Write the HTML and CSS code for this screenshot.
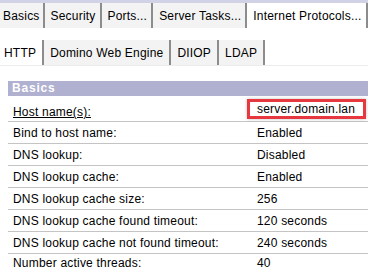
FILE: index.html
```html
<!DOCTYPE html>
<html lang="en">
<head>
    <meta charset="UTF-8">
    <title>Server Document</title>
    <link rel="stylesheet" href="styles.css">
</head>
<body>
    <div class="topstrip"></div>
    <div class="tabs main-tabs">
        <div class="tab first">Basics</div>
        <div class="tab">Security</div>
        <div class="tab">Ports...</div>
        <div class="tab">Server Tasks...</div>
        <div class="tab active">Internet Protocols...</div>
        <div class="tab rest"></div>
    </div>

    <div class="tabs sub-tabs">
        <div class="tab first active">HTTP</div>
        <div class="tab">Domino Web Engine</div>
        <div class="tab">DIIOP</div>
        <div class="tab">LDAP</div>
    </div>

    <div class="section">
        <div class="section-head">Basics</div>
        <div class="row host">
            <span class="label"><u>Host name(s):</u></span>
            <span class="value"><span class="highlight">server.domain.lan</span></span>
        </div>
        <div class="row"><span class="label">Bind to host name:</span><span class="value">Enabled</span></div>
        <div class="row"><span class="label">DNS lookup:</span><span class="value">Disabled</span></div>
        <div class="row"><span class="label">DNS lookup cache:</span><span class="value">Enabled</span></div>
        <div class="row"><span class="label">DNS lookup cache size:</span><span class="value">256</span></div>
        <div class="row"><span class="label">DNS lookup cache found timeout:</span><span class="value">120 seconds</span></div>
        <div class="row"><span class="label">DNS lookup cache not found timeout:</span><span class="value">240 seconds</span></div>
        <div class="row last"><span class="label">Number active threads:</span><span class="value">40</span></div>
    </div>
</body>
</html>
```

FILE: styles.css
```css
body {
    margin: 0;
    width: 368px;
    height: 270px;
    overflow: hidden;
    background: #fff;
    font-family: 'Liberation Sans', Arial, sans-serif;
    font-size: 12px;
    color: #000;
}
.topstrip {
    height: 3px;
    background: #d2d2e6;
}
.tabs {
    display: flex;
    align-items: stretch;
}
.main-tabs {
    height: 25px;
    background: #f3f3f3;
}
.sub-tabs {
    height: 27px;
    margin-top: 10px;
    border-bottom: 1px solid #ececec;
}
.tab {
    display: flex;
    align-items: center;
    letter-spacing: 0.2px;
    white-space: nowrap;
    background: #f3f3f3;
}
.main-tabs .tab {
    padding: 1px 6px 0 6px;
    box-shadow: inset -2px 0 0 #8c8c8c;
}
.main-tabs .tab.first {
    padding-left: 3px;
    padding-right: 5px;
}
.main-tabs .tab.active {
    background: #fff;
}
.main-tabs .tab.rest {
    flex: 1;
    box-shadow: none;
}
.sub-tabs .tab {
    padding: 0 6px;
    margin-top: 2px;
    border-right: 2px solid #8c8c8c;
}
.sub-tabs .tab.first {
    padding-left: 4px;
    background: #fff;
}
.section {
    margin: 15px 0 0 8px;
}
.section-head {
    height: 15px;
    line-height: 15px;
    background: #b0b0d0;
    color: #fff;
    font-weight: bold;
    letter-spacing: 0.8px;
    padding-left: 4px;
}
.row {
    display: flex;
    align-items: center;
    height: 21px;
    border-bottom: 1px solid #c4c4c4;
    letter-spacing: 0.2px;
}
.row.host {
    height: 23px;
    align-items: flex-end;
    padding-bottom: 2px;
}
.row.last {
    align-items: flex-start;
    padding-top: 3px;
    height: 12px;
    line-height: 12px;
    border-bottom: none;
}
.label {
    width: 244px;
    padding-left: 5px;
    white-space: nowrap;
}
.value {
    white-space: nowrap;
}
.highlight {
    display: inline-block;
    margin-left: -10px;
    padding: 0 8px 0 7px;
    border: 3px solid #e8383f;
    box-shadow: 0 0 3px rgba(0, 0, 0, 0.25);
}
```
